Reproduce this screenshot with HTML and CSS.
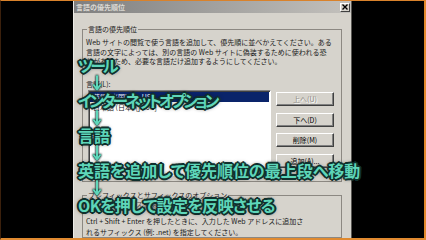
FILE: index.html
```html
<!DOCTYPE html>
<html lang="ja">

<head>
    <meta charset="UTF-8">
    <meta name="viewport" content="width=device-width, initial-scale=1.0">
    <title>言語の優先順位</title>

    <link rel="stylesheet" href="styles.css">
</head>

<body>
    <div class="frame">
        <div class="dialog">
            <div class="titlebar">
                <span class="title">言語の優先順位</span>
                <span class="close">
                    <svg width="6" height="6" viewBox="0 0 6 6"><path d="M0.5 0.5 L5.5 5.5 M5.5 0.5 L0.5 5.5" stroke="#000" stroke-width="1.4"/></svg>
                </span>
            </div>
            <div class="dialog-body">
                <fieldset class="group group-order">
                    <legend>言語の優先順位</legend>
                    <p class="note">Web サイトの閲覧で使う言語を追加して、優先順に並べかえてください。ある<br>言語の文字によっては、別の言語の Web サイトに偽装するために使われる恐<br>れがあるため、必要な言語だけ追加するようにしてください。</p>
                    <div class="list-label">言語(L):</div>
                    <div class="list-row">
                        <ul class="lang-list">
                            <li class="selected">英語 (米国) [en-US]</li>
                            <li>日本語 (日本) [ja-JP]</li>
                        </ul>
                        <div class="buttons">
                            <button disabled>上へ(U)</button>
                            <button>下へ(D)</button>
                            <button>削除(M)</button>
                            <button>追加(A)...</button>
                        </div>
                    </div>
                </fieldset>
                <fieldset class="group group-suffix">
                    <legend>プレフィックスとサフィックスのオプション</legend>
                    <label class="check"><span class="box"></span>サフィックスを使用しない(S)</label>
                    <p class="note">Ctrl + Shift + Enter を押したときに、入力した Web アドレスに追加さ<br>れるサフィックス (例: .net) を指定してください。</p>
                </fieldset>
            </div>
        </div>

        <!-- caption overlay drawn on top of the dialog -->
        <div class="steps">
            <div class="step kana">ツール</div>
            <svg class="arrow" viewBox="0 0 10 19"><path d="M5 3 V16 M1.8 12 L5 16.5 L8.2 12" /></svg>
            <div class="step kana">インターネットオプション</div>
            <svg class="arrow" viewBox="0 0 10 19"><path d="M5 3 V16 M1.8 12 L5 16.5 L8.2 12" /></svg>
            <div class="step">言語</div>
            <svg class="arrow" viewBox="0 0 10 19"><path d="M5 3 V16 M1.8 12 L5 16.5 L8.2 12" /></svg>
            <div class="step">英語を追加して優先順位の最上段へ移動</div>
            <svg class="arrow" viewBox="0 0 10 19"><path d="M5 3 V16 M1.8 12 L5 16.5 L8.2 12" /></svg>
            <div class="step tight">OKを押して設定を反映させる</div>
        </div>
    </div>
</body>

</html>
```

FILE: styles.css
```css
* {
    box-sizing: border-box;
}

body {
    margin: 0;
    background-color: #000;
    font-family: "Noto Sans CJK JP", sans-serif;
}

.frame {
    position: relative;
    width: 426px;
    height: 240px;
    overflow: hidden;
    background-color: #000;
    border-top: 1px solid #d9822b;
    border-right: 2px solid #e2892c;
    border-bottom: 2px solid #e08a30;
    border-left: 1px solid #3b200c;
    padding-left: 72px;
}

.dialog {
    width: 279px;
    height: 100%;
    background-color: #d6d3cc;
    border-left: 1px solid #ecebe6;
    border-right: 1px solid #5a5854;
    color: #1a1a1a;
}

.titlebar {
    height: 12px;
    display: flex;
    align-items: center;
    justify-content: space-between;
    padding: 0 1px 0 2px;
    background: linear-gradient(90deg, #7f7f7f, #c3c1bd);
}

.title {
    font-size: 7px;
    font-weight: bold;
    color: #dcdad4;
}

.close {
    width: 10px;
    height: 9px;
    display: flex;
    align-items: center;
    justify-content: center;
    background-color: #d6d3cc;
    border: 1px solid;
    border-color: #fff #404040 #404040 #fff;
}

.dialog-body {
    padding: 11px 9px 0 8px;
}

.group {
    margin: 0;
    min-width: 0;
    border: 1px solid #8c8882;
}

.group legend {
    padding: 0 1px;
    margin-left: 1px;
    font-size: 7px;
    line-height: 10px;
}

.group-order {
    padding: 4px 7px 5px 3px;
}

.note {
    margin: 0;
    font-size: 7px;
    line-height: 9.5px;
    white-space: nowrap;
}

.list-label {
    margin-top: 12px;
    font-size: 7px;
    line-height: 10px;
}

.list-row {
    display: flex;
    gap: 5px;
    margin-top: 1.5px;
}

.lang-list {
    flex: 1;
    height: 86px;
    margin: 0 0 0 2px;
    padding: 1px;
    list-style: none;
    background-color: #fff;
    border: 1px solid;
    border-color: #808080 #fff #fff #808080;
    box-shadow: inset 1px 1px 0 #404040;
}

.lang-list li {
    font-size: 7px;
    line-height: 10px;
    padding-left: 3px;
}

.lang-list .selected {
    background-color: #0a246a;
    color: #fff;
}

.buttons {
    width: 58px;
    display: flex;
    flex-direction: column;
    gap: 6.5px;
    padding-top: 2px;
}

.buttons button {
    height: 14px;
    padding: 0;
    font: 7px "Noto Sans CJK JP", sans-serif;
    color: #000;
    background-color: #d6d3cc;
    border: 1px solid;
    border-color: #fff #404040 #404040 #fff;
    box-shadow: inset -1px -1px 0 #808080;
}

.buttons button:disabled {
    color: #8e8b85;
    text-shadow: 1px 1px 0 #fff;
}

.group-suffix {
    margin-top: 8px;
    padding: 0 7px 0 3px;
}

.check {
    display: flex;
    align-items: center;
    gap: 4px;
    margin-left: 3px;
    font-size: 7px;
    line-height: 9px;
    color: #555;
}

.box {
    width: 8px;
    height: 8px;
    background-color: #fff;
    border: 1px solid;
    border-color: #808080 #fff #fff #808080;
}

.group-suffix .note {
    margin-top: 7px;
    line-height: 10.5px;
}

/* caption overlay */
.steps {
    position: absolute;
    left: 77px;
    top: 56px;
    display: flex;
    flex-direction: column;
    align-items: flex-start;
}

.step {
    font-size: 16px;
    font-weight: bold;
    line-height: 16px;
    font-feature-settings: "palt";
    white-space: nowrap;
    color: #5ed6b9;
    text-shadow:
        2px 0 0 #10302d, -2px 0 0 #10302d,
        0 2px 0 #10302d, 0 -2px 0 #10302d,
        1.4px 1.4px 0 #10302d, -1.4px -1.4px 0 #10302d,
        1.4px -1.4px 0 #10302d, -1.4px 1.4px 0 #10302d,
        0 0 4px #000;
}

.step.kana {
    letter-spacing: -3px;
}

.step.tight {
    letter-spacing: -0.6px;
}

.arrow {
    display: block;
    width: 10px;
    height: 19px;
    margin-left: 14px;
    overflow: visible;
}

.arrow path {
    fill: none;
    stroke: #5ed6b9;
    stroke-width: 2;
    stroke-linecap: round;
    stroke-linejoin: round;
    filter: drop-shadow(0 0 0.8px #10302d) drop-shadow(0 0 0.7px #10302d);
}
```
